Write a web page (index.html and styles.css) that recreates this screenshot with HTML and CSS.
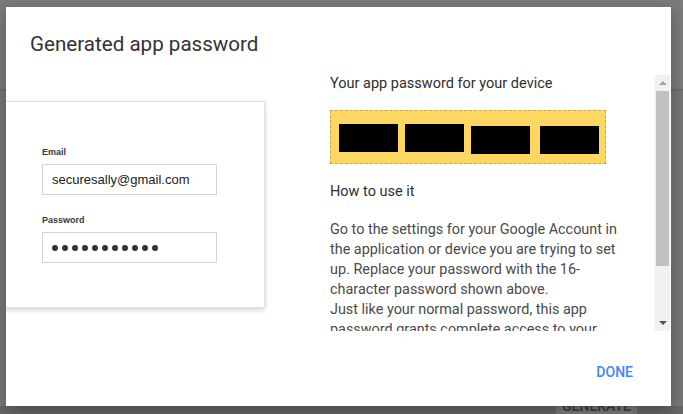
FILE: index.html
```html
<!DOCTYPE html>
<html lang="en">
<head>
  <meta charset="UTF-8" />
  <meta name="viewport" content="width=device-width, initial-scale=1" />
  <title>Generated app password</title>
  <link rel="stylesheet" href="styles.css">
</head>
<body>

  <div class="page">
    <div class="page-top"></div>
    <div class="page-bottom">
      <span class="generate">Generate</span>
    </div>
  </div>

  <div class="dialog">
    <h1 class="dialog-title">Generated app password</h1>

    <div class="dialog-body">
      <div class="illustration">
        <div class="signin-card">
          <div class="field-label">Email</div>
          <div class="field">securesally@gmail.com</div>
          <div class="field-label second">Password</div>
          <div class="field dots">
            <span></span><span></span><span></span><span></span><span></span><span></span>
            <span></span><span></span><span></span><span></span><span></span>
          </div>
        </div>
      </div>

      <div class="scroller">
        <div class="scroll-content">
          <h2 class="section-title">Your app password for your device</h2>
          <div class="password-box">
            <span class="chunk"></span>
            <span class="chunk"></span>
            <span class="chunk low"></span>
            <span class="chunk low"></span>
          </div>
          <h2 class="section-title how">How to use it</h2>
          <p class="instructions">
            Go to the settings for your Google Account in the application or device you are trying to set up. Replace your password with the 16-character password shown above.<br>
            Just like your normal password, this app password grants complete access to your Google Account. You won't need to remember it, so don't write it down or share it with anyone.
          </p>
        </div>
        <div class="scrollbar">
          <div class="arrow up"></div>
          <div class="thumb"></div>
          <div class="arrow down"></div>
        </div>
      </div>
    </div>

    <div class="dialog-actions">
      <button type="button" class="done">Done</button>
    </div>
  </div>

</body>
</html>
```

FILE: styles.css
```css
html, body {
  margin: 0;
  height: 414px;
  overflow: hidden;
}
body {
  position: relative;
  background: #777777;
  font-family: Roboto, "Liberation Sans", sans-serif;
}

/* page behind the overlay */
.page {
  position: absolute;
  inset: 0;
  display: flex;
  flex-direction: column;
}
.page-top {
  height: 89px;
  background: #7c7c7c;
  border-bottom: 2px solid #6c6c6c;
}
.page-bottom {
  margin-top: auto;
  height: 8px;
  background: #666666;
  position: relative;
  overflow: hidden;
}
.generate {
  position: absolute;
  left: 556px;
  top: -8px;
  padding: 0 6px;
  font-size: 14px;
  font-weight: 500;
  line-height: 16px;
  text-transform: uppercase;
  color: #3a3a3a;
  background: #7a7a7a;
}

/* dialog */
.dialog {
  position: relative;
  margin: 7px 0 0 6px;
  width: 665px;
  height: 399px;
  background: #fff;
  display: flex;
  flex-direction: column;
  overflow: hidden;
  box-shadow: 0 4px 16px rgba(0, 0, 0, 0.3);
}
.dialog-title {
  margin: 0;
  padding: 23px 24px 0;
  font-size: 20.6px;
  font-weight: 400;
  line-height: 28px;
  color: #333;
}
.dialog-body {
  display: flex;
  margin-top: 16px;
  height: 257px;
}

.illustration {
  width: 324px;
  flex-shrink: 0;
}
.signin-card {
  margin: 27px 0 0 -22px;
  padding: 45px 0 44px 57px;
  box-sizing: border-box;
  width: 281px;
  height: 207px;
  background: #fff;
  border: 1px solid #e2e2e2;
  box-shadow: 0 2px 5px rgba(0, 0, 0, 0.18);
  font-family: "Liberation Sans", Arial, sans-serif;
}
.field-label {
  font-size: 9px;
  font-weight: bold;
  line-height: 11px;
  color: #3a3a3a;
}
.field-label.second {
  margin-top: 20px;
}
.field {
  margin-top: 6px;
  width: 175px;
  height: 31px;
  box-sizing: border-box;
  border: 1px solid #d4d4d4;
  padding-left: 9px;
  font-size: 13px;
  line-height: 30px;
  color: #222;
}
.dots {
  display: flex;
  align-items: center;
  gap: 4px;
}
.dots span {
  width: 6px;
  height: 6px;
  border-radius: 50%;
  background: #333;
}

.scroller {
  flex: 1;
  display: flex;
  overflow: hidden;
}
.scroll-content {
  width: 294px;
  padding-right: 31px;
  overflow: hidden;
}
.section-title {
  margin: 0;
  font-size: 14.5px;
  font-weight: 400;
  line-height: 20px;
  color: #2e2e2e;
}
.section-title.how {
  margin-top: 18px;
}
.password-box {
  margin-top: 16px;
  width: 276px;
  height: 54px;
  box-sizing: border-box;
  border: 1px dashed #c9a94a;
  background: #fed662;
  display: flex;
  align-items: flex-start;
  padding: 13px 0 0 8px;
  gap: 7px;
}
.chunk {
  width: 59px;
  height: 28px;
  background: #000;
}
.chunk.low {
  margin-top: 2px;
}
.chunk.low:last-child {
  margin-left: 3px;
}
.instructions {
  margin: 18px 0 0;
  font-size: 14.4px;
  line-height: 20px;
  color: #4a4a4a;
}

.scrollbar {
  width: 15px;
  margin: 1px 1px 0 0;
  height: 256px;
  background: #f1f1f1;
  display: flex;
  flex-direction: column;
  align-items: center;
}
.arrow {
  width: 0;
  height: 0;
  border-left: 4px solid transparent;
  border-right: 4px solid transparent;
}
.arrow.up {
  margin-top: 6px;
  border-bottom: 4px solid #a3a3a3;
}
.arrow.down {
  margin-top: auto;
  margin-bottom: 6px;
  border-top: 4px solid #505050;
}
.thumb {
  margin-top: 6px;
  width: 13px;
  height: 175px;
  background: #c1c1c1;
}

.dialog-actions {
  display: flex;
  justify-content: flex-end;
  padding: 31px 30px 0;
}
.done {
  border: none;
  background: none;
  padding: 0 8px;
  font-family: Roboto, sans-serif;
  font-size: 14px;
  font-weight: 500;
  line-height: 20px;
  text-transform: uppercase;
  color: #4285f4;
  cursor: pointer;
}
```
